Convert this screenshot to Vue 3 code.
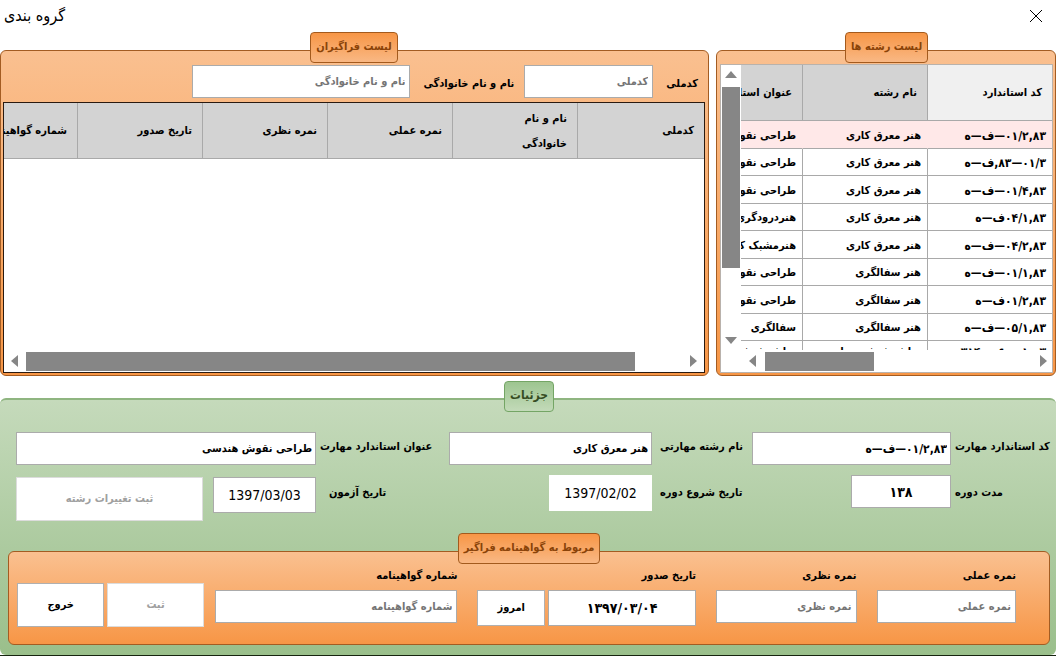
<script setup>
import { ref } from 'vue'

const standards = [
  { code: '۰۱/۲,۸۳—ف—ه', field: 'هنر معرق کاری', title: 'طراحی نقوش هندسی' },
  { code: '۰۱/۳—۸۳,ف—ه', field: 'هنر معرق کاری', title: 'طراحی نقوش هندسی' },
  { code: '۰۱/۴,۸۳—ف—ه', field: 'هنر معرق کاری', title: 'طراحی نقوش هندسی' },
  { code: '۰۴/۱,۸۳ف—ه', field: 'هنر معرق کاری', title: 'هنردرودگری' },
  { code: '۰۴/۲,۸۳—ف—ه', field: 'هنر معرق کاری', title: 'هنرمشبک کاری' },
  { code: '۰۱/۱,۸۳—ف—ه', field: 'هنر سفالگری', title: 'طراحی نقوش سنتی' },
  { code: '۰۱/۲,۸۳ف—ه', field: 'هنر سفالگری', title: 'طراحی نقوش سنتی' },
  { code: '۰۵/۱,۸۳—ف—ه', field: 'هنر سفالگری', title: 'سفالگری' },
  { code: '۳—۰۱—۰۶—۳۱۴', field: 'تراش شیشه و بلور', title: 'تراش شیشه' },
]
const selected = ref(0)
const learnerColumns = ['کدملی', 'نام و نام\nخانوادگی', 'نمره عملی', 'نمره نظری', 'تاریخ صدور', 'شماره گواهینامه']

const nationalId = ref('')
const fullName = ref('')
const code = ref('۰۱/۲,۸۳—ف—ه')
const field = ref('هنر معرق کاری')
const title = ref('طراحی نقوش هندسی')
const duration = ref('۱۳۸')
const startDate = ref('1397/02/02')
const examDate = ref('1397/03/03')
const practical = ref('')
const theory = ref('')
const issueDate = ref('۱۳۹۷/۰۳/۰۴')
const certificate = ref('')
</script>

<template>
  <main class="window" dir="rtl">
    <header class="titlebar">
      <button class="close" type="button" aria-label="بستن">
        <svg viewBox="0 0 14 14" width="14" height="14"><path d="M1 1 13 13M13 1 1 13" /></svg>
      </button>
      <h1>گروه بندی</h1>
    </header>

    <div class="lists">
      <section class="panel orange standards">
        <h2>لیست رشته ها</h2>
        <div class="list">
          <div class="viewport">
            <table>
              <thead>
                <tr><th class="active">کد استاندارد</th><th>نام رشته</th><th>عنوان استاندارد</th></tr>
              </thead>
              <tbody>
                <tr v-for="(row, i) in standards" :key="i" :class="{ selected: i === selected }" @click="selected = i">
                  <td class="code">{{ row.code }}</td><td>{{ row.field }}</td><td>{{ row.title }}</td>
                </tr>
              </tbody>
            </table>
          </div>
          <div class="vbar">
            <svg viewBox="0 0 12 7" width="12" height="7"><path d="M0 7 6 0 12 7Z" /></svg>
            <div class="track"><span class="thumb"></span></div>
            <svg viewBox="0 0 12 7" width="12" height="7"><path d="M0 0 6 7 12 0Z" /></svg>
          </div>
          <div class="hbar" dir="ltr">
            <svg viewBox="0 0 7 12" width="7" height="12"><path d="M7 0 0 6 7 12Z" /></svg>
            <div class="track"><span class="thumb"></span></div>
            <svg viewBox="0 0 7 12" width="7" height="12"><path d="M0 0 7 6 0 12Z" /></svg>
          </div>
        </div>
      </section>

      <section class="panel orange learners">
        <h2>لیست فراگیران</h2>
        <div class="filters">
          <label for="nid">کدملی</label>
          <input id="nid" v-model="nationalId" class="nid" type="text" placeholder="کدملی">
          <label for="full">نام و نام خانوادگی</label>
          <input id="full" v-model="fullName" class="full" type="text" placeholder="نام و نام خانوادگی">
        </div>
        <div class="grid-box">
          <div class="viewport">
            <table>
              <thead>
                <tr><th v-for="c in learnerColumns" :key="c">{{ c }}</th></tr>
              </thead>
            </table>
          </div>
          <div class="hbar" dir="ltr">
            <svg viewBox="0 0 7 12" width="7" height="12"><path d="M7 0 0 6 7 12Z" /></svg>
            <div class="track"><span class="thumb"></span></div>
            <svg viewBox="0 0 7 12" width="7" height="12"><path d="M0 0 7 6 0 12Z" /></svg>
          </div>
        </div>
      </section>
    </div>

    <section class="panel green details">
      <h2>جزئیات</h2>
      <div class="form">
        <label for="code">کد استاندارد مهارت</label>
        <input id="code" v-model="code" class="code" type="text">
        <label for="field" class="spaced">نام رشته مهارتی</label>
        <input id="field" v-model="field" type="text">
        <label for="title">عنوان استاندارد مهارت</label>
        <input id="title" v-model="title" type="text">

        <label for="duration" class="second">مدت دوره</label>
        <input id="duration" v-model="duration" class="short digits" type="text">
        <label for="start" class="second spaced">تاریخ شروع دوره</label>
        <input id="start" v-model="startDate" class="date plain" type="text">
        <label for="exam" class="second exam">تاریخ آزمون</label>
        <div class="exam-cell">
          <input id="exam" v-model="examDate" class="date" type="text">
          <button class="save-field" type="button" disabled>ثبت تغییرات رشته</button>
        </div>
      </div>

      <section class="panel orange certificate">
        <h2>مربوط به گواهینامه فراگیر</h2>
        <div class="cert-form">
          <div class="cell">
            <label for="practical">نمره عملی</label>
            <input id="practical" v-model="practical" type="text" placeholder="نمره عملی">
          </div>
          <div class="cell">
            <label for="theory">نمره نظری</label>
            <input id="theory" v-model="theory" type="text" placeholder="نمره نظری">
          </div>
          <div class="cell">
            <label for="issue">تاریخ صدور</label>
            <div class="pair">
              <input id="issue" v-model="issueDate" class="digits" type="text">
              <button type="button">امروز</button>
            </div>
          </div>
          <div class="cell number">
            <label for="cert">شماره گواهینامه</label>
            <input id="cert" v-model="certificate" type="text" placeholder="شماره گواهینامه">
          </div>
          <div class="actions">
            <button type="button" disabled>ثبت</button>
            <button class="exit" type="button">خروج</button>
          </div>
        </div>
      </section>
    </section>
  </main>
</template>

<style>
body {
  margin: 0;
  background: #fff;
}
</style>

<style scoped>
* {
  box-sizing: border-box;
}
.window {
  display: flex;
  flex-direction: column;
  min-height: 100vh;
  overflow: hidden;
  border-bottom: 1px solid #16240f;
  font: bold 11px/18px "DejaVu Sans Condensed", "DejaVu Sans", sans-serif;
  color: #000;
}
.titlebar {
  display: flex;
  align-items: center;
  justify-content: space-between;
  height: 32px;
  padding: 0 4px;
}
h1 {
  margin: 0;
  font: 16px/24px "DejaVu Sans Condensed", "DejaVu Sans", sans-serif;
}
.close {
  display: flex;
  align-items: center;
  justify-content: center;
  width: 32px;
  height: 30px;
  padding: 0;
  border: 0;
  background: none;
}
.close path {
  fill: none;
  stroke: #000;
  stroke-width: 1;
}

.panel {
  display: flex;
  flex-direction: column;
  border: 1px solid #a35c22;
  border-radius: 6px;
}
.panel > h2 {
  align-self: center;
  flex: none;
  height: 31px;
  margin: -19px 0 0;
  padding: 0 5px;
  border: 1px solid #a35a1d;
  border-radius: 4px;
  font-size: 11px;
  line-height: 27px;
  white-space: nowrap;
}
.orange {
  background: linear-gradient(#fac090, #f79646);
}
.orange > h2 {
  background: linear-gradient(#f79646, #f9b884);
  color: #8a4308;
}
.green {
  background: linear-gradient(#c5dabb, #9abf8b);
  border-color: #8fb580;
}
.green > h2 {
  border-color: #74a565;
  background: linear-gradient(#9dc590, #c3dab9);
  color: #354c22;
  font-size: 12px;
}

.lists {
  display: grid;
  grid-template-columns: minmax(0, 340fr) minmax(0, 709fr);
  gap: 7px;
  padding-top: 18px;
}
.standards {
  padding: 0 2px 2px 3px;
}
.list {
  display: grid;
  grid-template: minmax(0, 1fr) 22px / minmax(0, 1fr) 20px;
  margin-top: 1px;
  border: 1px solid #b9b2ac;
  background: #fff;
}
.viewport {
  overflow: hidden;
}
.standards .viewport {
  height: 285px;
}
table {
  width: 752px;
  table-layout: fixed;
  border-collapse: separate;
  border-spacing: 0;
}
.standards table {
  width: 375px;
}
th,
td {
  overflow: hidden;
  border-left: 1px solid #a9a9a9;
  border-bottom: 1px solid #a9a9a9;
  text-align: right;
  white-space: pre;
}
th {
  height: 56px;
  padding: 0 10px;
  background: #d3d3d3;
  line-height: 25px;
}
.learners th:first-child {
  width: 127px;
}
th.active {
  background: #f0f0f0;
}
td {
  height: 28px;
  padding: 2px 6px 0;
}
tr:nth-child(even) td {
  height: 27px;
}
tr:last-child td {
  padding: 0 6px 5px;
}
.code {
  font-size: 12px;
}
.selected td {
  border-left-color: #ffe8e8;
  background: #ffe8e8;
}

.vbar,
.hbar {
  display: flex;
  align-items: center;
  background: #fff;
}
.vbar {
  flex-direction: column;
  padding: 6px 0;
}
.vbar svg,
.hbar svg {
  flex: none;
  fill: #868686;
}
.track {
  flex: 1;
}
.thumb {
  display: block;
  background: #868686;
}
.vbar .track {
  padding: 9px 0;
}
.vbar .thumb {
  width: 18px;
  height: 75%;
}
.hbar {
  grid-column: 1 / -1;
  height: 22px;
  padding: 0 7px;
}
.hbar .thumb {
  height: 19px;
}
.standards .hbar {
  padding: 0 5px 0 28px;
}
.standards .hbar .track {
  padding: 0 9px;
}
.standards .hbar .thumb {
  width: 41%;
}

.learners {
  padding: 0 3px 2px 2px;
}
.filters {
  display: flex;
  align-items: flex-start;
  height: 39px;
  padding: 2px 7px 0 0;
}
.filters label {
  padding-top: 10px;
  white-space: nowrap;
}
.nid {
  width: 129px;
  margin: 0 13px 0 10px;
}
.full {
  width: 218px;
  margin: 0 13px 0 0;
}
.grid-box {
  display: flex;
  flex: 1;
  flex-direction: column;
  border: 1px solid #2a1a10;
  background: #fff;
}
.grid-box .viewport {
  flex: 1;
}
.learners .track {
  padding: 0 55px 0 8px;
}

input,
button {
  font: inherit;
  color: inherit;
}
input {
  width: 100%;
  min-width: 0;
  height: 33px;
  padding: 0 3px;
  border: 1px solid #ababab;
  border-radius: 0;
  background: #fff;
  outline: 0;
}
input.code {
  font-size: 12px;
}
.filters input,
.cert-form input {
  padding: 0 4px;
}
input::placeholder {
  color: #757575;
  opacity: 1;
}
button {
  border: 1px solid #b0b0b0;
  background: #fff;
  white-space: nowrap;
}
button:disabled {
  border-color: #dcdcdc;
  color: #a0a0a0;
}
input.digits {
  font-size: 14px;
  text-align: center;
}

.details {
  flex: 1;
  margin-top: 22px;
  padding: 0 4px 10px 6px;
  border-width: 2px 0 0;
}
.form {
  display: grid;
  grid-template-columns: 100px 199fr 100px 203fr 133px 300fr;
  gap: 10px 0;
  margin-top: 20px;
  padding: 0 1px 0 10px;
}
.form label {
  padding: 6px 0 0 4px;
  text-align: left;
  white-space: nowrap;
}
.form .second {
  padding-top: 9px;
}
.form .spaced {
  padding-left: 8px;
}
.form .exam {
  padding-left: 13px;
}
.form .short {
  width: 100px;
}
.date {
  width: 103px;
  height: 36px;
  text-align: center;
  font: 14px/18px "DejaVu Sans Condensed", "DejaVu Sans", sans-serif;
}
.plain {
  border-color: #fff;
}
.exam-cell {
  display: flex;
  gap: 10px;
  padding-top: 2px;
}
.exam-cell .date {
  flex: none;
}
.save-field {
  flex: 1;
  height: 44px;
}

.certificate {
  margin: auto 2px 0;
  padding-bottom: 17px;
}
.cert-form {
  display: grid;
  grid-template-columns: 139fr 140fr 218fr 233fr 186fr;
  align-items: start;
  column-gap: 20px;
  padding: 0 33px 0 8px;
}
.cell {
  display: flex;
  flex-direction: column;
  gap: 5px;
  padding-top: 3px;
}
.cell label {
  white-space: nowrap;
}
.number {
  margin-left: -9px;
}
.pair,
.actions {
  display: flex;
  gap: 3px;
}
.pair input,
.pair button {
  height: 36px;
}
.pair input {
  flex: 147;
}
.pair button {
  flex: 70;
  padding: 0;
}
.actions {
  padding-top: 19px;
}
.actions button {
  flex: 97;
  height: 44px;
  padding: 0;
}
.actions .exit {
  flex: 88;
}
</style>
